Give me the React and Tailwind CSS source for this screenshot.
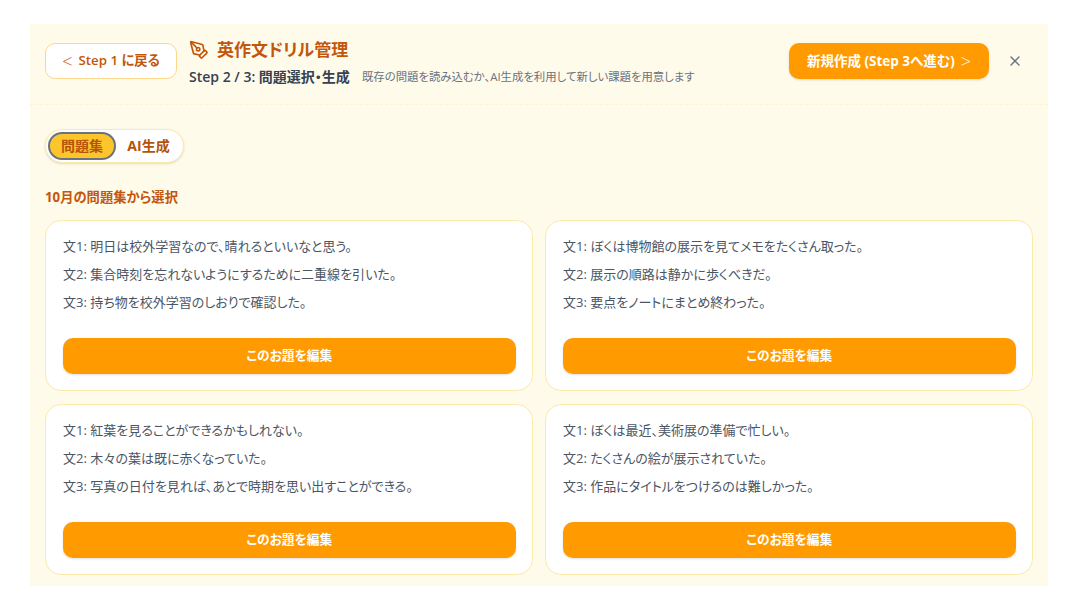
import { PenTool, X } from "lucide-react";

const DRILLS = [
  ["明日は校外学習なので、晴れるといいなと思う。", "集合時刻を忘れないようにするために二重線を引いた。", "持ち物を校外学習のしおりで確認した。"],
  ["ぼくは博物館の展示を見てメモをたくさん取った。", "展示の順路は静かに歩くべきだ。", "要点をノートにまとめ終わった。"],
  ["紅葉を見ることができるかもしれない。", "木々の葉は既に赤くなっていた。", "写真の日付を見れば、あとで時期を思い出すことができる。"],
  ["ぼくは最近、美術展の準備で忙しい。", "たくさんの絵が展示されていた。", "作品にタイトルをつけるのは難しかった。"],
];

const DrillCard = ({ lines }) => (
  <div className="h-[171px] rounded-2xl border border-[#fde9a8] bg-white pl-[16.5px] pr-4 pt-[11px]">
    <div className="h-[106px] pl-[0.5px] text-[13px] leading-[28px] text-[#4b5563]">
      {lines.map((line, i) => (
        <p key={i}>文{i + 1}: {line}</p>
      ))}
    </div>
    <button className="h-9 w-full rounded-[10px] bg-[#ff9b00] text-[12.7px] font-bold text-white shadow-sm">
      このお題を編集
    </button>
  </div>
);

const App = () => {
  return (
    <div className="h-[606px] bg-white pl-[30px] pr-8 pt-6 font-['Open_Sans','Noto_Sans_CJK_JP',sans-serif] [font-feature-settings:'palt']">
      <div className="h-[562px] overflow-hidden bg-[#fffbeb]">
        <header className="flex h-[81px] items-start justify-between border-b border-dashed border-[#fdf3d0] pl-[15px] pr-[25px] pt-[14px]">
          <div className="flex gap-3">
            <button className="mt-[5px] flex h-9 w-[132px] items-center justify-center gap-[6px] rounded-[10px] border border-[#fdd68a] bg-white text-[13.3px] font-semibold text-[#c2570c]">
              <span className="text-lg font-light leading-none">&lt;</span>
              <span>Step 1 に戻る</span>
            </button>
            <div>
              <h1 className="flex items-center gap-2 text-[17px] font-bold leading-6 text-[#c2570c]">
                <PenTool className="h-5 w-5" strokeWidth={2} />
                英作文ドリル管理
              </h1>
              <div className="mt-[5px] flex items-center gap-3">
                <span className="text-sm font-semibold leading-5 text-[#374151]">Step 2 / 3: 問題選択・生成</span>
                <span className="text-[11.4px] leading-5 text-[#6b7280]">既存の問題を読み込むか、AI生成を利用して新しい課題を用意します</span>
              </div>
            </div>
          </div>
          <div className="mt-[5px] flex items-center gap-[18px]">
            <button className="flex h-9 w-[200px] items-center justify-center gap-[6px] rounded-[10px] bg-[#ff9b00] text-[13.5px] font-bold text-white shadow-sm">
              <span>新規作成 (Step 3へ進む)</span>
              <span className="text-lg font-light leading-none">&gt;</span>
            </button>
            <X className="h-4 w-4 text-[#6b7280]" />
          </div>
        </header>

        <div className="px-[15px]">
          <div className="mt-[24px] flex h-[34px] w-[139px] items-center rounded-full border border-[#fde9a8] bg-white p-[2px] shadow-sm">
            <span className="flex h-7 w-[68px] items-center justify-center rounded-full border-2 border-[#6b7280] bg-[#fcc52c] text-sm font-bold text-[#b45309]">問題集</span>
            <span className="flex-1 text-center text-sm font-bold text-[#b45309]">AI生成</span>
          </div>
          <h2 className="mt-[24px] text-[13.3px] font-bold leading-5 text-[#c2570c]">10月の問題集から選択</h2>
          <div className="mt-[13px] grid grid-cols-2 gap-x-3 gap-y-[13px]">
            {DRILLS.map((lines, i) => (
              <DrillCard key={i} lines={lines} />
            ))}
          </div>
        </div>
      </div>
    </div>
  );
};

export default App;
